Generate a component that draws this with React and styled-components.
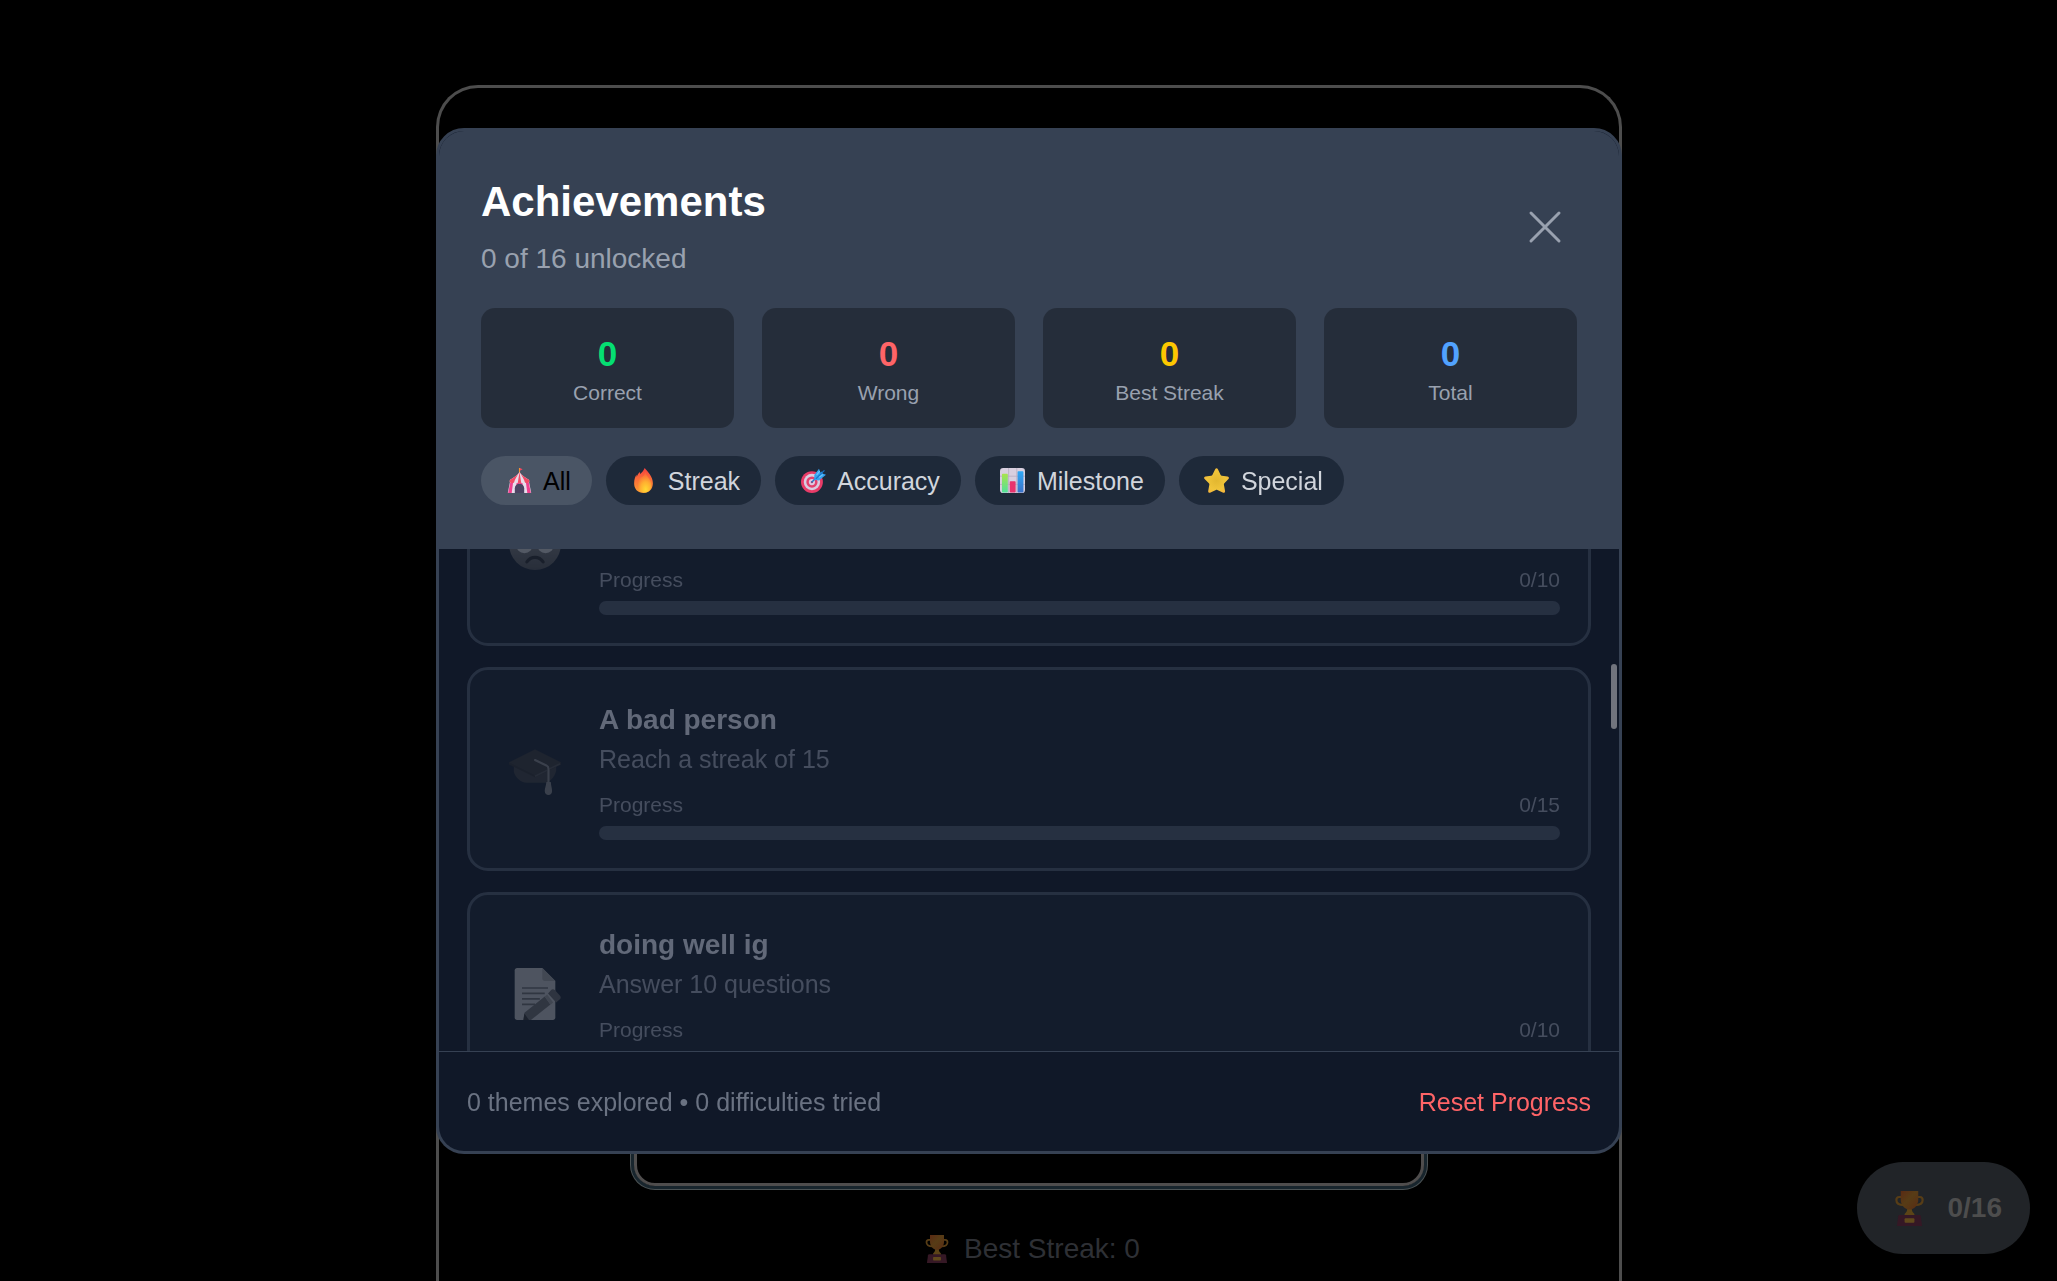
import React, { useLayoutEffect, useRef, useState } from "react";
import styled, { createGlobalStyle } from "styled-components";

const GlobalStyle = createGlobalStyle`
  * { box-sizing: border-box; }
  body {
    margin: 0;
    background: #000;
    color: #fff;
    font-family: "Liberation Sans", Arial, sans-serif;
    font-size: 28px;
    line-height: 42px;
  }
  button { font: inherit; border: 0; cursor: pointer; }
  h2, h3, p { margin: 0; }
`;

/* ---------- game page behind the dialog ---------- */

const Page = styled.main`
  height: 100vh;
  overflow: hidden;
  padding: 85px 27px 0 28px;
`;

const GameFrame = styled.section`
  display: flex;
  flex-direction: column;
  align-items: center;
  justify-content: flex-end;
  gap: 42px;
  height: 100%;
  max-width: 1186px;
  margin: 0 auto;
  padding: 42px;
  padding-bottom: 11px;
  border: 3px solid #4d4d4d;
  border-bottom: 0;
  border-radius: 42px 42px 0 0;
`;

const AnswerPanel = styled.div`
  width: 100%;
  max-width: 790px;
  height: 168px;
  border: 3px solid #4f4d4d;
  border-radius: 21px;
  box-shadow: 0 0 0 3px #18252d, 0 0 0 4px #4b5254;
`;

const BestStreak = styled.p`
  display: flex;
  align-items: center;
  gap: 8px;
  color: #2e3035;
`;

const TrophyButton = styled.button`
  position: fixed;
  right: 27px;
  bottom: 27px;
  display: flex;
  align-items: center;
  gap: 14px;
  height: 92px;
  padding: 0 28px;
  border-radius: 46px;
  background: #212428;
  color: #4d4d4d;
  font-weight: 700;
`;

/* ---------- dialog ---------- */

const Overlay = styled.div`
  position: fixed;
  inset: 0;
  display: flex;
  justify-content: center;
  padding: 128px 27px 127px 28px;
`;

const Dialog = styled.section`
  display: flex;
  flex-direction: column;
  width: 100%;
  max-width: 1186px;
  overflow: hidden;
  border: 3px solid #364153;
  border-radius: 28px;
  background: #101828;
`;

const Header = styled.header`
  display: flex;
  flex-direction: column;
  gap: 28px;
  padding: 42px 42px 44px;
  background: #364153;
`;

const TitleRow = styled.div`
  display: flex;
  align-items: center;
  justify-content: space-between;
`;

const Title = styled.h2`
  margin-bottom: 8px;
  font-size: 42px;
  line-height: 57px;
`;

const Subtitle = styled.p`
  color: #99a1af;
`;

const CloseButton = styled.button`
  display: grid;
  place-items: center;
  width: 64px;
  height: 64px;
  padding: 0;
  background: none;
  color: #99a1af;
`;

const Stats = styled.div`
  display: grid;
  grid-template-columns: repeat(4, 1fr);
  gap: 28px;
`;

const Stat = styled.div`
  padding: 21px;
  border-radius: 14px;
  background: rgba(0, 0, 0, 0.3);
  text-align: center;
`;

const StatValue = styled.div`
  color: ${(p) => p.$color};
  font-size: 35px;
  font-weight: 700;
  line-height: 50px;
`;

const StatLabel = styled.div`
  color: #99a1af;
  font-size: 21px;
  line-height: 28px;
`;

const Filters = styled.div`
  display: flex;
  gap: 14px;
`;

const Filter = styled.button`
  display: flex;
  align-items: center;
  gap: 7px;
  height: 49px;
  padding: 0 21px;
  border-radius: 25px;
  background: ${(p) => (p.$active ? "#4a5565" : "#1e2939")};
  color: ${(p) => (p.$active ? "#000" : "#d1d5dc")};
  font-size: 25px;
`;

const EmojiSlot = styled.span`
  display: grid;
  place-items: center;
  width: ${(p) => p.$width}px;
  svg { display: block; }
`;

const ListArea = styled.div`
  position: relative;
  flex: 1;
  min-height: 0;
`;

const List = styled.div`
  display: flex;
  flex-direction: column;
  gap: 21px;
  height: 100%;
  padding: 28px;
  overflow-y: auto;
  scrollbar-width: none;
`;

const ScrollThumb = styled.div`
  position: absolute;
  top: 115px;
  right: 2px;
  width: 6px;
  height: 65px;
  border-radius: 3px;
  background: #71747d;
`;

const Card = styled.article`
  display: flex;
  flex-shrink: 0;
  align-items: center;
  gap: 28px;
  padding: 28px;
  border: 3px solid #364153;
  border-radius: 21px;
  background: #172130;
  opacity: 0.6;
`;

const CardIcon = styled(EmojiSlot)`
  filter: grayscale(1);
  opacity: 0.5;
`;

const CardBody = styled.div`
  flex: 1;
`;

const CardTitle = styled.h3`
  min-height: 44px;
  color: #99a1af;
  font-size: 28px;
  line-height: 44px;
`;

const CardText = styled.p`
  min-height: 35px;
  margin-bottom: 14px;
  color: #6a7282;
  font-size: 25px;
  line-height: 35px;
`;

const ProgressLabels = styled.div`
  display: flex;
  justify-content: space-between;
  margin-bottom: 7px;
  color: #6a7282;
  font-size: 21px;
  line-height: 28px;
`;

const ProgressTrack = styled.div`
  height: 14px;
  border-radius: 7px;
  background: #364153;
`;

const Footer = styled.footer`
  display: flex;
  align-items: center;
  justify-content: space-between;
  height: 100px;
  padding: 0 28px;
  border-top: 1px solid #364153;
  color: #6a7282;
  font-size: 25px;
`;

const ResetButton = styled.button`
  padding: 0;
  background: none;
  color: #ff6467;
`;

/* ---------- drawings ---------- */

const Tent = () => (
  <svg width="25" height="25" viewBox="0 0 32 32" aria-hidden="true">
    <path d="M15.300 0h1.400v8h-1.400z" fill="#f59a2f" />
    <path d="M16.500 0l3.500 1.600-3.500 2z" fill="#f8465e" />
    <path d="M4 17h24l3 15H1z" fill="#e9dcec" />
    <path d="M4.500 17L1.500 32H6l2-15zM27.500 17l3 15H26l-2-15zM12 17h8v6h-8z" fill="#f0408e" />
    <path d="M10 32v-6a6 6 0 0 1 12 0v6z" fill="#4c4463" />
    <path d="M16 5C13 10 8 12 4 15c-.8 1.500-.8 3 .5 3.800 1.500.7 3.500.5 4.500-.3 1.500 1.300 3.500 1.300 4.800.3 1.400.8 3 .8 4.400 0 1.300 1 3.300 1 4.800-.3 1 .8 3 1 4.500.3 1.300-.8 1.300-2.300.5-3.800C24 12 19 10 16 5z" fill="#e8dce9" />
    <path d="M16 5C13 10 8 12 4 15c-.8 1.500-.8 3 .5 3.800 1.500.7 3.500.5 4.500-.3C10 14 13 10 16 5zM16 5c3 5 8 7 12 10 .8 1.500.8 3-.5 3.800-1.500.7-3.500.5-4.500-.3C22 14 19 10 16 5zM16 5l-2.200 13.800c1.400.8 3 .8 4.400 0z" fill="#f34a66" />
  </svg>
);

const Flame = () => (
  <svg width="25" height="25" viewBox="0 0 32 32" aria-hidden="true">
    <defs>
      <linearGradient id="flameOuter" x1="0" y1="0" x2="0" y2="1">
        <stop offset="0" stopColor="#f5403f" />
        <stop offset=".5" stopColor="#fb7137" />
        <stop offset="1" stopColor="#fb9f33" />
      </linearGradient>
      <radialGradient id="flameInner" cx=".6" cy=".85" r=".75">
        <stop offset="0" stopColor="#ffd933" />
        <stop offset=".5" stopColor="#ffae30" />
        <stop offset="1" stopColor="#f96638" />
      </radialGradient>
    </defs>
    <path d="M17.500 0c4 5 10.500 11 10.500 19.500C28 27 23 32 16 32S4 27 4 19.500C4 14 5.500 11 7 8.500c.3 1 .3 2 .2 3C8 9 9.500 6.500 11.500 5c.2 1 .2 2 0 3 2-2 4.500-4 6-8z" fill="url(#flameOuter)" />
    <path d="M18.500 5c1 6 7.500 9 7.500 17 0 6-4 9.500-9.500 9.500S8 27.500 8 22c0-4.500 2.500-7 3.500-9.500C15 11 18 9 18.500 5z" fill="url(#flameInner)" />
  </svg>
);

const Target = () => (
  <svg width="25" height="25" viewBox="0 0 32 32" aria-hidden="true">
    <circle cx="14" cy="18" r="14" fill="#e93c68" />
    <circle cx="14" cy="18" r="10.500" fill="#d9cce0" />
    <circle cx="14" cy="18" r="7.200" fill="#e3416e" />
    <circle cx="14" cy="18" r="4" fill="#dccde2" />
    <circle cx="14" cy="18" r="1.500" fill="#c13a63" />
    <path d="M14 18l8-8" stroke="#2679c9" strokeWidth="1.800" strokeLinecap="round" />
    <path d="M17 9l6-8 2 5 2-2 .500 3L32 8.500 23 16l-6-1z" fill="#35a3f0" />
    <path d="M19 14L30 3" stroke="#1673c8" strokeWidth="1.500" />
    <path d="M20 9l4-5M23 12l5-3.500" stroke="#74c9fb" strokeWidth="1.300" />
  </svg>
);

const Chart = () => (
  <svg width="25" height="25" viewBox="0 0 32 32" aria-hidden="true">
    <defs>
      <linearGradient id="barGreen" x1="0" y1="0" x2="0" y2="1">
        <stop offset="0" stopColor="#a8e34c" />
        <stop offset="1" stopColor="#51e19b" />
      </linearGradient>
      <linearGradient id="barBlue" x1="0" y1="0" x2="0" y2="1">
        <stop offset="0" stopColor="#2fa9f6" />
        <stop offset="1" stopColor="#3b72c9" />
      </linearGradient>
    </defs>
    <rect width="32" height="32" rx="4" fill="#d8cfdf" />
    <path d="M0 10.500h32M0 21h32M11 0v32M21.500 0v32" stroke="#b6aabf" strokeWidth="1" />
    <rect x="2.500" y="7.500" width="7.500" height="24" rx="1" fill="url(#barGreen)" />
    <rect x="12.500" y="17" width="7.500" height="14.500" rx="1" fill="#e8336d" />
    <rect x="22.500" y="4" width="7.500" height="27.500" rx="1" fill="url(#barBlue)" />
  </svg>
);

const Star = () => (
  <svg width="25" height="25" viewBox="0 0 32 32" aria-hidden="true">
    <defs>
      <radialGradient id="starFill" cx=".5" cy=".5" r=".55">
        <stop offset="0" stopColor="#e2b730" />
        <stop offset=".7" stopColor="#f0c43a" />
        <stop offset="1" stopColor="#f6b63c" />
      </radialGradient>
    </defs>
    <path d="M14.300 1.500c.8-1.600 2.700-1.600 3.500 0l3.500 7.300c.3.600.8 1 1.500 1.100l7.300 1c1.700.3 2.400 2 1.200 3.200l-5.200 5.400c-.5.500-.7 1.100-.6 1.800l1.400 7.900c.3 1.900-1.300 3.100-3 2.200l-6.800-3.400c-.6-.3-1.300-.3-1.900 0l-6.800 3.400c-1.700.9-3.300-.3-3-2.200l1.400-7.900c.1-.7-.1-1.300-.6-1.800L.8 14.100C-.5 12.900.2 11.200 1.900 10.900l7.300-1c.7-.1 1.200-.5 1.500-1.100z" fill="url(#starFill)" />
  </svg>
);

const Trophy = ({ size }) => (
  <svg width={size} height={size} viewBox="0 0 32 32" aria-hidden="true">
    <defs>
      <linearGradient id="cup" x1="0" y1="0" x2="1" y2="1">
        <stop offset="0" stopColor="#5a2a13" />
        <stop offset=".45" stopColor="#573c16" />
        <stop offset="1" stopColor="#5a2c14" />
      </linearGradient>
    </defs>
    <path d="M9 5.500H6.500A2.700 2.700 0 0 0 4 8.300C4 12 7.500 13 11 13M23 5.500h2.500A2.700 2.700 0 0 1 28 8.300c0 3.700-3.500 4.700-7 4.700" fill="none" stroke="#573d16" strokeWidth="2" />
    <path d="M14 15h4c0 3 .500 4 2.500 6v2h-9v-2c2-2 2.500-3 2.500-6z" fill="#5c4417" />
    <path d="M8 0h16v8c0 5-4 9-8 9s-8-4-8-9z" fill="url(#cup)" />
    <path d="M7 22h18c.700 0 1.200.4 1.300 1l1.200 9h-23l1.200-9c.1-.6.600-1 1.300-1z" fill="#351825" />
    <rect x="11.500" y="25" width="9" height="4" rx=".8" fill="#60491c" />
  </svg>
);

const SadFace = () => (
  <svg width="52" height="52" viewBox="0 0 32 32" aria-hidden="true">
    <defs>
      <linearGradient id="face" x1="0" y1="0" x2="0" y2="1">
        <stop offset="0" stopColor="#aaa" />
        <stop offset="1" stopColor="#5c5c5c" />
      </linearGradient>
    </defs>
    <circle cx="16" cy="16" r="16" fill="url(#face)" />
    <circle cx="9.500" cy="16.500" r="5.200" fill="#e8e8e8" />
    <circle cx="22.500" cy="16.500" r="5.200" fill="#e8e8e8" />
    <circle cx="11" cy="16" r="3" fill="#333" />
    <circle cx="21" cy="16" r="3" fill="#333" />
    <path d="M11 27c2.500-3.700 7.500-3.700 10 0" fill="none" stroke="#2c2c2c" strokeWidth="2" strokeLinecap="round" />
  </svg>
);

const GraduationCap = () => (
  <svg width="52" height="52" viewBox="0 0 32 32" aria-hidden="true">
    <path d="M3 13v5c1 3 4 6.500 8 6.500h10c4 0 7-3.500 8-7.500v-4z" fill="#424242" />
    <path d="M0 12l16-8 16 8v1.200L16 21 0 13.200z" fill="#303030" />
    <path d="M0 12l16-8 16 8-16 8z" fill="#393939" />
    <path d="M16 20.500l7.500-3.700M25 15.800l6.500-3" stroke="#565656" strokeWidth="1" />
    <path d="M16 10.500l7 3.300c1 .5 1.300 1 1.300 2V25" fill="none" stroke="#999" strokeWidth="1.300" strokeLinecap="round" />
    <path d="M23 24h2.700c.2 2.500.8 4 .8 5.500 0 1.600-1 2.500-2.200 2.500S22 31 22 29.500c0-1.500.8-3 1-5.500z" fill="#999" />
  </svg>
);

const Memo = () => (
  <svg width="52" height="52" viewBox="0 0 32 32" aria-hidden="true">
    <path d="M5 0h15.500l8 8v22.500c0 .9-.7 1.500-1.500 1.500H5c-.900 0-1.500-.6-1.500-1.500v-29C3.500.6 4.100 0 5 0z" fill="#dadada" />
    <path d="M20.500 0l8 8h-6.500c-.900 0-1.500-.6-1.500-1.500z" fill="#b0b0b0" />
    <path d="M8 12.300h16M8 15.600h14M8 19h11M8 22.400h8" stroke="#777" strokeWidth="1" />
    <path d="M9.500 27.500L22 17.500l3.500 5-12 9.500H9z" fill="#777" />
    <path d="M22 17.500l1.500-1.200 3.700 5-1.700 1.300z" fill="#aaa" />
    <path d="M24 15.700l1.800-2c.6-.700 1.700-.8 2.400-.1l3.200 3.400c.6.700.6 1.600-.1 2.200L29 21.300z" fill="#707070" />
    <path d="M9.500 28L8.800 32h3.500z" fill="#333" />
  </svg>
);

const CloseIcon = () => (
  <svg width="56" height="56" viewBox="0 0 56 56" aria-hidden="true">
    <path d="M14 14l28 28M42 14L14 42" stroke="currentColor" strokeWidth="3" strokeLinecap="round" />
  </svg>
);

/* ---------- data ---------- */

const stats = [
  { label: "Correct", value: 0, color: "#05df72" },
  { label: "Wrong", value: 0, color: "#ff6467" },
  { label: "Best Streak", value: 0, color: "#fdc700" },
  { label: "Total", value: 0, color: "#51a2ff" },
];

const filters = [
  { name: "All", Icon: Tent },
  { name: "Streak", Icon: Flame },
  { name: "Accuracy", Icon: Target },
  { name: "Milestone", Icon: Chart },
  { name: "Special", Icon: Star },
];

const achievements = [
  { id: "streak-10", goal: 10, Icon: SadFace },
  { id: "streak-15", title: "A bad person", text: "Reach a streak of 15", goal: 15, Icon: GraduationCap },
  { id: "questions-10", title: "doing well ig", text: "Answer 10 questions", goal: 10, Icon: Memo },
];

function Achievement({ title, text, goal, Icon }) {
  return (
    <Card>
      <CardIcon $width={73}>
        <Icon />
      </CardIcon>
      <CardBody>
        <CardTitle>{title}</CardTitle>
        <CardText>{text}</CardText>
        <ProgressLabels>
          <span>Progress</span>
          <span>0/{goal}</span>
        </ProgressLabels>
        <ProgressTrack role="progressbar" aria-label="Progress" aria-valuenow={0} aria-valuemax={goal} />
      </CardBody>
    </Card>
  );
}

export default function App() {
  const [active, setActive] = useState("All");
  const listRef = useRef(null);

  useLayoutEffect(() => {
    listRef.current.scrollTop = 135;
  }, []);

  return (
    <>
      <GlobalStyle />
      <Page>
        <GameFrame>
          <AnswerPanel />
          <BestStreak>
            <EmojiSlot $width={38}>
              <Trophy size={28} />
            </EmojiSlot>
            Best Streak: 0
          </BestStreak>
        </GameFrame>
        <TrophyButton type="button">
          <EmojiSlot $width={49}>
            <Trophy size={35} />
          </EmojiSlot>
          0/16
        </TrophyButton>
      </Page>
      <Overlay>
        <Dialog role="dialog" aria-labelledby="achievements-title">
          <Header>
            <TitleRow>
              <div>
                <Title id="achievements-title">Achievements</Title>
                <Subtitle>0 of 16 unlocked</Subtitle>
              </div>
              <CloseButton type="button" aria-label="Close">
                <CloseIcon />
              </CloseButton>
            </TitleRow>
            <Stats>
              {stats.map((s) => (
                <Stat key={s.label}>
                  <StatValue $color={s.color}>{s.value}</StatValue>
                  <StatLabel>{s.label}</StatLabel>
                </Stat>
              ))}
            </Stats>
            <Filters>
              {filters.map(({ name, Icon }) => (
                <Filter key={name} type="button" $active={name === active} onClick={() => setActive(name)}>
                  <EmojiSlot $width={34}>
                    <Icon />
                  </EmojiSlot>
                  {name}
                </Filter>
              ))}
            </Filters>
          </Header>
          <ListArea>
            <List ref={listRef}>
              {achievements.map((a) => (
                <Achievement key={a.id} {...a} />
              ))}
            </List>
            <ScrollThumb />
          </ListArea>
          <Footer>
            <p>0 themes explored • 0 difficulties tried</p>
            <ResetButton type="button">Reset Progress</ResetButton>
          </Footer>
        </Dialog>
      </Overlay>
    </>
  );
}
